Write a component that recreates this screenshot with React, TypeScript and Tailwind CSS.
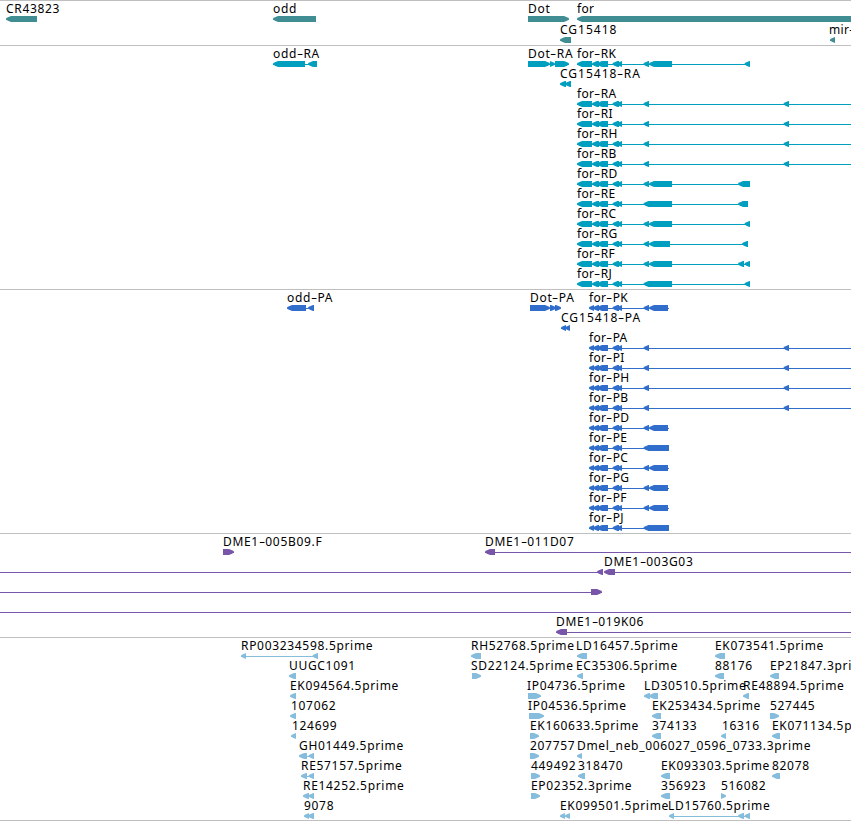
interface Feature {
  label?: string;
  x: number;
  // Where the label starts, if it is not above the first block
  labelX?: number;
  end?: number;
  strand?: "+" | "-";
  blocks: [number, number][];
}

interface TrackData {
  name: string;
  color: string;
  rowClass: string;
  padClass: string;
  rows: Feature[][];
}

const VIEW_WIDTH = 851;

const forR: [number, number][] = [
  [577, 592],
  [592, 599],
  [597, 608],
  [612.5, 619],
  [617, 622],
];

const forP: [number, number][] = [
  [589, 594],
  [593, 599],
  [597, 608],
  [612.5, 619],
  [617, 622],
];

const transcript = (
  label: string,
  end: number,
  ...blocks: [number, number][]
): Feature[] => [{ label, x: 577, end, blocks: [...forR, ...blocks] }];

const protein = (
  label: string,
  end: number,
  ...blocks: [number, number][]
): Feature[] => [{ label, x: 589, end, blocks: [...forP, ...blocks] }];

const one = (
  label: string,
  x: number,
  end: number,
  strand: "+" | "-" = "-",
  labelX?: number
): Feature => ({ label, x, end, strand, labelX, blocks: [[x, end]] });

const tracks: TrackData[] = [
  {
    name: "gene",
    color: "#408e93",
    rowClass: "relative h-[21px]",
    padClass: "pb-[2px]",
    rows: [
      [
        one("CR43823", 6, 37),
        one("odd", 273, 316),
        one("Dot", 528, 569, "+"),
        one("for", 577, 860),
      ],
      [one("CG15418", 560, 571), one("mir-", 830, 835, "-", 829)],
    ],
  },
  {
    name: "transcript",
    color: "#009fbf",
    rowClass: "relative h-5",
    padClass: "pb-[3px]",
    rows: [
      [
        { label: "odd-RA", x: 273, end: 317, blocks: [[273, 305], [308, 317]] },
        {
          label: "Dot-RA",
          x: 528,
          end: 569,
          strand: "+",
          blocks: [[528, 550], [550, 555], [555, 569]],
        },
        ...transcript("for-RK", 750, [643.5, 649], [649, 672], [744.5, 750]),
      ],
      [{ label: "CG15418-RA", x: 560, end: 571, blocks: [[560, 566], [565, 571]] }],
      transcript("for-RA", 851, [643.5, 649], [783.5, 789]),
      transcript("for-RI", 851, [643.5, 649], [783.5, 789]),
      transcript("for-RH", 851, [643.5, 649], [783.5, 789]),
      transcript("for-RB", 851, [643.5, 649], [783.5, 789]),
      transcript("for-RD", 750, [643.5, 649], [649, 672], [738, 750]),
      transcript("for-RE", 748, [643.5, 672], [738, 748]),
      transcript("for-RC", 750, [643.5, 649], [649, 672], [744.5, 750]),
      transcript("for-RG", 748, [643.5, 649], [649, 670], [742, 748]),
      transcript("for-RF", 750, [643.5, 649], [649, 672], [738, 744], [744.5, 750]),
      transcript("for-RJ", 750, [643.5, 672], [744.5, 750]),
    ],
  },
  {
    name: "protein",
    color: "#316ecc",
    rowClass: "relative h-5",
    padClass: "pb-[3px]",
    rows: [
      [
        { label: "odd-PA", x: 287, end: 314, blocks: [[287, 306], [308, 314]] },
        {
          label: "Dot-PA",
          x: 530,
          end: 561,
          strand: "+",
          blocks: [[530, 550], [550, 556], [555, 561]],
        },
        ...protein("for-PK", 669, [643.5, 649], [649, 668]),
      ],
      [{ label: "CG15418-PA", x: 561, end: 570, blocks: [[561, 566], [565, 570]] }],
      protein("for-PA", 851, [643.5, 649], [783.5, 789]),
      protein("for-PI", 851, [643.5, 649], [783.5, 789]),
      protein("for-PH", 851, [643.5, 649], [783.5, 789]),
      protein("for-PB", 851, [643.5, 649], [783.5, 789]),
      protein("for-PD", 669, [643.5, 649], [649, 668]),
      protein("for-PE", 669, [643.5, 669]),
      protein("for-PC", 669, [643.5, 649], [649, 668]),
      protein("for-PG", 669, [643.5, 649], [649, 668]),
      protein("for-PF", 669, [643.5, 649], [649, 668]),
      protein("for-PJ", 669, [643.5, 669]),
    ],
  },
  {
    name: "bac",
    color: "#7755a8",
    rowClass: "relative h-5",
    padClass: "pb-[3px]",
    rows: [
      [
        one("DME1-005B09.F", 223, 234, "+"),
        { label: "DME1-011D07", x: 485, end: 851, blocks: [[485, 495]] },
      ],
      [
        { x: 0, end: 603, blocks: [[597, 603]] },
        { label: "DME1-003G03", x: 604, end: 851, blocks: [[604, 615]] },
      ],
      [{ x: 0, end: 602, strand: "+", blocks: [[591, 602]] }],
      [{ x: 0, end: 851, blocks: [] }],
      [{ label: "DME1-019K06", x: 556, end: 851, blocks: [[556, 567]] }],
    ],
  },
  {
    name: "est",
    color: "#86bcdc",
    rowClass: "relative h-5",
    padClass: "pb-[2px]",
    rows: [
      [
        { label: "RP003234598.5prime", x: 241, end: 318, blocks: [[241, 246], [312.5, 318]] },
        one("RH52768.5prime", 471, 481),
        one("LD16457.5prime", 577, 587, "-", 576),
        one("EK073541.5prime", 715, 725),
      ],
      [
        one("UUGC1091", 289, 296),
        one("SD22124.5prime", 472, 481, "+", 471),
        one("EC35306.5prime", 577, 583, "-", 576),
        one("88176", 715, 724),
        one("EP21847.3prime", 770, 779),
      ],
      [
        one("EK094564.5prime", 290, 296),
        one("IP04736.5prime", 528, 541, "+", 527),
        { label: "LD30510.5prime", x: 644, end: 658, blocks: [[644, 650], [649, 658]] },
        one("RE48894.5prime", 743, 749),
      ],
      [
        one("107062", 290, 296, "-", 291),
        one("IP04536.5prime", 529, 544, "+", 528),
        one("EK253434.5prime", 652, 661),
        one("527445", 770, 779, "+"),
      ],
      [
        one("124699", 291, 296, "-", 292),
        one("EK160633.5prime", 530, 539, "+"),
        one("374133", 652, 661),
        one("16316", 721, 726, "-", 722),
        one("EK071134.5prime", 772, 780),
      ],
      [
        { label: "GH01449.5prime", x: 299, end: 314, blocks: [[299, 307], [308.5, 314]] },
        one("207757", 530, 539, "+"),
        one("Dmel_neb_006027_0596_0733.3prime", 577, 582),
      ],
      [
        { label: "RE57157.5prime", x: 301, end: 314, blocks: [[301, 307], [308.5, 314]] },
        one("449492", 531, 540, "+"),
        one("318470", 578, 585),
        one("EK093303.5prime", 661, 670),
        one("82078", 772, 780),
      ],
      [
        { label: "RE14252.5prime", x: 303, end: 314, blocks: [[303, 309], [308.5, 314]] },
        one("EP02352.3prime", 531, 540, "+"),
        one("356923", 661, 670),
        one("516082", 721, 726, "+"),
      ],
      [
        { label: "9078", x: 304, end: 314, blocks: [[304, 309], [308, 314]] },
        { label: "EK099501.5prime", x: 560, end: 570, blocks: [[560, 565], [565, 570]] },
        {
          label: "LD15760.5prime",
          x: 669,
          labelX: 668,
          end: 750,
          blocks: [[669, 674], [738, 744], [744.5, 750]],
        },
      ],
    ],
  },
];

// A block is 6px tall and narrows to a rounded tip on the strand side
function blockPath([a, b]: [number, number], strand: "+" | "-") {
  const tip = strand === "-" ? a : b;
  const back = strand === "-" ? b : a;
  const dir = strand === "-" ? 1 : -1;
  const head = Math.min(5, b - a) * dir;
  const mid = 2 * dir;
  return `M${tip} 2.5L${tip + mid} 1.3L${tip + head} 0H${back}V6H${tip + head}L${tip + mid} 4.7L${tip} 3.5Z`;
}

function labelTracking(text: string) {
  if (/^(for|mir)/.test(text)) return "tracking-[0.3px]";
  if (text.startsWith("CG")) return "tracking-[1px]";
  return "tracking-[0.68px]";
}

function Label({ text }: { text: string }) {
  return (
    <>
      {text.split(/(-)/).map((part, i) =>
        part === "-" ? (
          <span key={i} className="inline-block w-[6.4px] origin-left scale-x-[1.6]">
            -
          </span>
        ) : (
          part
        )
      )}
    </>
  );
}

function Row({ features, color, className }: { features: Feature[]; color: string; className: string }) {
  return (
    <div className={className}>
      {features.map(
        (f) =>
          f.label && (
            <span
              key={f.label}
              className={`absolute top-0 whitespace-nowrap leading-4 ${labelTracking(f.label)}`}
              style={{ left: f.labelX ?? f.x }}
            >
              <Label text={f.label} />
            </span>
          )
      )}
      <svg
        width={VIEW_WIDTH}
        height={6}
        fill={color}
        className="absolute left-0 top-[15px]"
      >
        {features.map((f) => (
          <g key={f.label ?? f.x}>
            <rect x={f.x} y={3} width={(f.end ?? f.x) - f.x} height={1} />
            {f.blocks.map((b) => (
              <path key={b[0]} d={blockPath(b, f.strand ?? "-")} />
            ))}
          </g>
        ))}
      </svg>
    </div>
  );
}

export default function App() {
  return (
    <main className="w-[851px] h-[821px] overflow-hidden bg-white text-black text-[12px] font-['Noto_Sans',sans-serif] border-b border-[#bfbfbf]">
      {tracks.map((track) => (
        <section key={track.name} className="border-t border-[#bfbfbf]">
          <div className={track.padClass}>
            {track.rows.map((row, i) => (
              <Row key={i} features={row} color={track.color} className={track.rowClass} />
            ))}
          </div>
        </section>
      ))}
    </main>
  );
}
